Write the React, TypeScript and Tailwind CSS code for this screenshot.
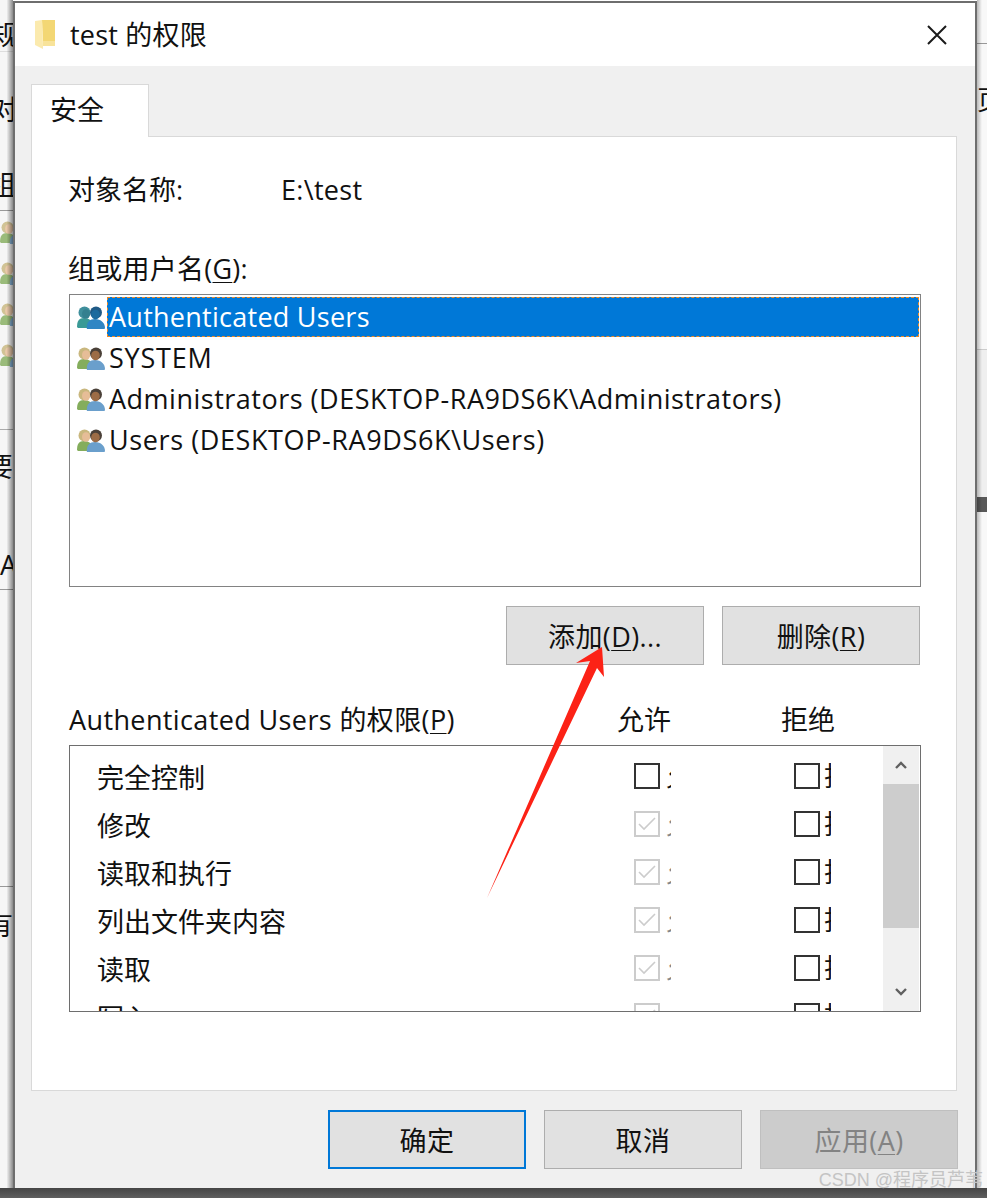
import React from "react";

const font = "font-['Open_Sans','Noto_Sans_CJK_SC',sans-serif]";

function Group({ selected = false }: { selected?: boolean }) {
  const c = selected
    ? { h1: "#3f8f9c", b1: "#3a9a96", h2: "#1f5a86", b2: "#2f86c4" }
    : { h1: "#c9b77e", b1: "#84ad5c", h2: "#4a4038", b2: "#6a9fcc" };
  const face = selected ? "#34808f" : "#e6bd97";
  const face2 = selected ? "#1c6a9e" : "#9c6c46";
  return (
    <svg width="28" height="24" viewBox="0 0 28 24" className="shrink-0">
      <path d="M0 22c0-6 2-9 7-9s9 3 9 9v1H1z" fill={c.b1} />
      <circle cx="7.5" cy="7.5" r="6" fill={c.h1} />
      <ellipse cx="9" cy="9" rx="4" ry="4.8" fill={face} />
      <path d="M10 25c-1-7 2-11 8-11s10 4 10 9l-1 2z" fill={c.b2} />
      <circle cx="19" cy="7.5" r="6" fill={c.h2} />
      <ellipse cx="18.5" cy="9.5" rx="4.3" ry="4.8" fill={face2} />
    </svg>
  );
}

function Btn({
  children,
  kind = "normal",
}: {
  children: React.ReactNode;
  kind?: "normal" | "default" | "disabled";
}) {
  const cls =
    kind === "default"
      ? "border-2 border-[#0078d7] bg-[#e1e1e1] text-[#111]"
      : kind === "disabled"
        ? "border border-[#bfbfbf] bg-[#cccccc] text-[#838383]"
        : "border border-[#adadad] bg-[#e1e1e1] text-[#111]";
  return (
    <div className={`flex h-[59px] w-[198px] items-center justify-center pt-[1px] text-[27px] leading-none tracking-[0.4px] ${cls}`}>
      {children}
    </div>
  );
}

function U({ children }: { children: React.ReactNode }) {
  return <span className="underline decoration-1 underline-offset-[3px]">{children}</span>;
}

function Check({ state }: { state: "off" | "dim" }) {
  if (state === "off") return <div className="h-[26px] w-[26px] shrink-0 border-2 border-[#333333] bg-white" />;
  return (
    <div className="flex h-[26px] w-[26px] shrink-0 items-center justify-center border-2 border-[#cccccc] bg-white">
      <svg width="22" height="22" viewBox="0 0 22 22">
        <path d="M3 11l5 5L19 5" fill="none" stroke="#cccccc" strokeWidth="1.6" />
      </svg>
    </div>
  );
}

const perms = ["完全控制", "修改", "读取和执行", "列出文件夹内容", "读取", "写入"];
const users = [
  { name: "Authenticated Users", track: "tracking-[0.26px]" },
  { name: "SYSTEM", track: "tracking-[0.8px]" },
  { name: "Administrators (DESKTOP-RA9DS6K\\Administrators)", track: "tracking-[0.5px]" },
  { name: "Users (DESKTOP-RA9DS6K\\Users)", track: "tracking-[0.6px]" },
];

export default function App() {
  return (
    <div className={`relative h-[1198px] w-[987px] overflow-hidden bg-white text-[#111] ${font}`}>
      {/* desktop behind the dialog */}
      <div className="flex h-[1188px] justify-between">
        <div className="relative w-[13px] overflow-hidden bg-[#f6f6f6] text-[27px] leading-[36px]">
          <div className="h-[52px] border-b border-[#dddddd] pt-[17px]">
            <div className="-ml-[8px] w-[30px]">规</div>
          </div>
          <div className="h-[159px] border-b border-[#999999] pt-[40px]">
            <div className="-ml-[9px] w-[30px]">对</div>
            <div className="mt-[39px] -ml-[11px] w-[30px]">组</div>
          </div>
          <div className="flex h-[219px] flex-col gap-[17px] border-b border-[#999999] pt-[9px] opacity-80">
            <Group />
            <Group />
            <Group />
            <Group />
          </div>
          <div className="h-[160px] border-b border-[#999999] pt-[19px]">
            <div className="-ml-[14px] w-[30px]">要</div>
            <div className="mt-[62px] w-[30px]">A</div>
          </div>
          <div className="h-[297px] border-b border-[#999999]" />
          <div className="pt-[20px]">
            <div className="-ml-[14px] w-[30px]">有</div>
          </div>
          <div className="absolute inset-0 bg-gradient-to-r from-transparent via-transparent to-[#00000070]" />
        </div>
        <div className="relative w-[10px] overflow-hidden bg-[#f8f8f8] text-[27px] leading-[36px]">
          <div className="h-[44px] border-b border-[#999999]" />
          <div className="h-[306px] border-b border-[#cccccc] pt-[38px]">
            <div className="w-[30px]">页</div>
          </div>
          <div className="h-[147px] bg-[#efefef]" />
          <div className="h-[15px] bg-[#585858]" />
          <div className="absolute inset-0 bg-gradient-to-r from-[#00000040] via-transparent to-transparent" />
        </div>
      </div>
      <div className="h-[10px] bg-gradient-to-b from-[#454545] to-[#5f5f5f]" />

      {/* dialog window */}
      <div className="absolute left-[13px] top-[1px] flex h-[1187px] w-[964px] flex-col border-x-2 border-t-2 border-[#6e6e6e] bg-[#f0f0f0]">
        <div className="flex h-[63px] items-center bg-white pl-[20px] pr-[27px]">
          <svg width="21" height="31" viewBox="0 0 21 31" className="shrink-0">
            <path d="M7 1h13v25H8z" fill="#f3d774" />
            <path d="M20 22v5H8v-5z" fill="#f8e39a" />
            <path d="M0 2l7-1 1 26v3l-8-4z" fill="#fbeaae" />
          </svg>
          <div className="ml-[14px] flex-1 text-[27px] leading-none tracking-[0.2px]">test 的权限</div>
          <svg width="22" height="22" viewBox="0 0 22 22">
            <path d="M2 2l18 18M20 2L2 20" stroke="#1a1a1a" strokeWidth="2" fill="none" />
          </svg>
        </div>

        <div className="flex flex-1 flex-col pl-[16px] pr-[17px] pt-[18px]">
          <div className="relative z-10 -mb-px flex h-[53px] w-[118px] items-center border border-b-0 border-[#d9d9d9] bg-white pb-[3px] pl-[18px] text-[27px] leading-none">
            安全
          </div>
          <div className="mr-px h-[955px] border border-[#d9d9d9] bg-white pl-[37px] pt-[34px]">
            <div className="flex h-[36px] items-center text-[27px] leading-none">
              <div className="-ml-px w-[214px]">对象名称:</div>
              <div className="-ml-px tracking-[0.3px]">E:\test</div>
            </div>
            <div className="mt-[43px] flex h-[36px] items-center text-[27px] leading-none">
              <div className="-ml-px tracking-[0.25px]">
                组或用户名(<U>G</U>):
              </div>
            </div>
            <div className="mt-[8px] h-[293px] w-[852px] border border-[#828282] bg-white pr-px pt-[2px]">
              {users.map((u, i) => (
                <div key={u.name} className="flex h-[41px] items-start pl-[7px]">
                  <div className="pt-[8px]">
                    <Group selected={i === 0} />
                  </div>
                  <div
                    className={`ml-[2px] flex h-[40px] flex-1 items-center pb-[2px] pl-[1px] text-[27px] leading-none ${u.track} ${
                      i === 0 ? "border border-dashed border-[#f08a24] bg-[#0078d7] text-white" : "border border-transparent"
                    }`}
                  >
                    {u.name}
                  </div>
                </div>
              ))}
            </div>
            <div className="mt-[19px] flex w-[851px] justify-end gap-[18px]">
              <Btn>
                添加(<U>D</U>)...
              </Btn>
              <Btn>
                删除(<U>R</U>)
              </Btn>
            </div>
            <div className="mt-[36px] flex h-[36px] items-center text-[27px] leading-none">
              <div className="w-[548px] tracking-[0.38px]">
                Authenticated Users 的权限(<U>P</U>)
              </div>
              <div className="w-[164px]">允许</div>
              <div>拒绝</div>
            </div>
            <div className="mt-[8px] flex h-[267px] w-[852px] overflow-hidden border border-[#6e6e6e] bg-white pr-px">
              <div className="flex-1 overflow-hidden pt-[6px]">
                {perms.map((p, i) => (
                  <div key={p} className="flex h-[48px] items-center pl-[27px]">
                    <div className="w-[537px] pt-[2px] text-[27px] leading-none">{p}</div>
                    <Check state={i === 0 ? "off" : "dim"} />
                    <div className={`ml-[6px] h-[26px] w-[5px] overflow-hidden text-[27px] leading-[26px] ${i === 0 ? "text-[#111]" : "text-[#888]"}`}>
                      <span className="block w-[30px]">允</span>
                    </div>
                    <div className="w-[123px]" />
                    <Check state="off" />
                    <div className="ml-[4px] h-[26px] w-[7px] overflow-hidden text-[27px] leading-[26px] text-[#111]">
                      <span className="block w-[30px]">拒</span>
                    </div>
                  </div>
                ))}
              </div>
              <div className="flex w-[36px] shrink-0 flex-col bg-[#f0f0f0]">
                <div className="flex h-[38px] items-center justify-center">
                  <svg width="14" height="10" viewBox="0 0 14 10">
                    <path d="M2 8l5-5 5 5" fill="none" stroke="#606060" strokeWidth="2.4" />
                  </svg>
                </div>
                <div className="h-[144px] bg-[#cdcdcd]" />
                <div className="flex flex-1 items-end justify-center pb-[14px]">
                  <svg width="14" height="10" viewBox="0 0 14 10">
                    <path d="M2 2l5 5 5-5" fill="none" stroke="#606060" strokeWidth="2.4" />
                  </svg>
                </div>
              </div>
            </div>
          </div>
          <div className="mt-[19px] flex justify-end gap-[18px]">
            <Btn kind="default">确定</Btn>
            <Btn>取消</Btn>
            <Btn kind="disabled">
              应用(<U>A</U>)
            </Btn>
          </div>
        </div>
      </div>

      {/* red annotation arrow */}
      <svg className="pointer-events-none absolute left-0 top-0" width="987" height="1198" viewBox="0 0 987 1198">
        <polygon points="602,647 604,677 597,668 487,898 590,661 576,663" fill="#fc2216" />
      </svg>

      {/* watermark */}
      <div className="absolute right-[4px] top-[1169px] font-['Liberation_Sans','Noto_Sans_CJK_SC',sans-serif] text-[18px] leading-[22px] text-[#c4c4c4]">
        CSDN @程序员芦苇
      </div>
    </div>
  );
}
